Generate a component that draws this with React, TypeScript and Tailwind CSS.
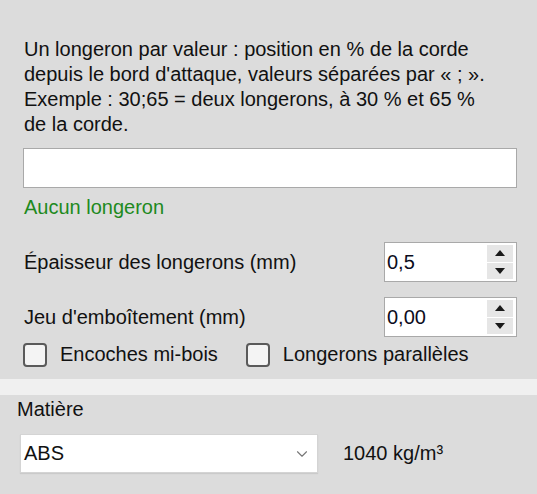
import { ChevronDown } from "lucide-react";

function Spinner({ value }: { value: string }) {
  return (
    <div className="flex h-[40px] w-[133px] border border-[#a9a9a9] bg-white">
      <div className="flex flex-1 items-center pl-[2px] text-[20px] text-[#0c0c20]">{value}</div>
      <div className="my-[2px] mr-[3px] flex w-[26px] flex-col gap-[1px]">
        <div className="flex flex-1 items-center justify-center bg-[#e6e6e6]">
          <svg width="10" height="6" viewBox="0 0 10 6">
            <path d="M0 6 L5 0 L10 6 Z" fill="#1a1a1a" />
          </svg>
        </div>
        <div className="flex flex-1 items-center justify-center bg-[#e6e6e6]">
          <svg width="10" height="6" viewBox="0 0 10 6">
            <path d="M0 0 L10 0 L5 6 Z" fill="#1a1a1a" />
          </svg>
        </div>
      </div>
    </div>
  );
}

function Check({ label }: { label: string }) {
  return (
    <label className="flex items-center gap-[13px]">
      <span className="h-[24px] w-[24px] rounded-[4px] border-2 border-[#5a5a5a] bg-[#f4f4f4]" />
      <span>{label}</span>
    </label>
  );
}

export default function App() {
  return (
    <div
      className="flex h-[494px] w-[537px] flex-col bg-[#dcdcdc] text-[20px] leading-[25px] text-[#111]"
      style={{ fontFamily: '"Liberation Sans", Arial, sans-serif' }}
    >
      <div className="flex flex-col pl-[23px] pr-[20px] pt-[37px]">
        <p className="pl-[1px]">
          Un longeron par valeur : position en % de la corde
          <br />
          depuis le bord d'attaque, valeurs séparées par « ; ».
          <br />
          Exemple : 30;65 = deux longerons, à 30 % et 65 %
          <br />
          de la corde.
        </p>
        <div className="mt-[11px] h-[40px] w-[494px] border border-[#a9a9a9] bg-white" />
        <div className="mt-[7px] pl-[1px] text-[#1e8a1e]">Aucun longeron</div>

        <div className="mt-[22px] flex items-center justify-between">
          <span className="pl-[1px]">Épaisseur des longerons (mm)</span>
          <Spinner value="0,5" />
        </div>
        <div className="mt-[15px] flex items-center justify-between">
          <span className="pl-[1px]">Jeu d'emboîtement (mm)</span>
          <Spinner value="0,00" />
        </div>
        <div className="mt-[5px] flex items-center gap-[28px]">
          <Check label="Encoches mi-bois" />
          <Check label="Longerons parallèles" />
        </div>
      </div>

      <div className="mt-[12px] h-[16px] bg-[#f0f0f0]" />

      <div className="flex flex-col px-[17px] pt-[2px]">
        <div>Matière</div>
        <div className="mt-[12px] flex items-center gap-[25px]">
          <div className="ml-[3px] flex h-[39px] w-[298px] items-center justify-between border border-[#d4d4d4] bg-white pl-[3px] pr-[6px] shadow-[0_1px_1px_rgba(0,0,0,0.08)]">
            <span>ABS</span>
            <ChevronDown size={18} strokeWidth={1.5} color="#777" />
          </div>
          <span>1040 kg/m³</span>
        </div>
      </div>
    </div>
  );
}
